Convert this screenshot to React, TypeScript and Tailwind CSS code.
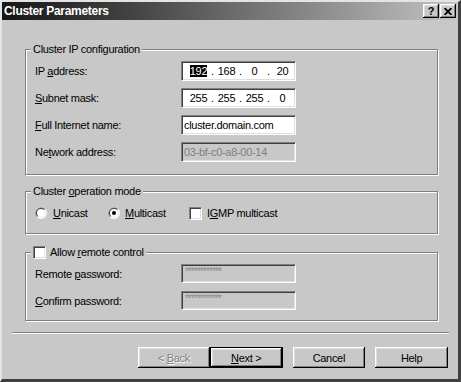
import type { ReactNode } from "react";

const SUNKEN =
  "border border-t-[#808080] border-l-[#808080] border-b-white border-r-white shadow-[inset_1px_1px_0_#404040,inset_-1px_-1px_0_#dfdfdf]";
const RAISED =
  "bg-[#c8c8c8] shadow-[inset_-1px_-1px_0_#000,inset_1px_1px_0_#fff,inset_-2px_-2px_0_#808080,inset_2px_2px_0_#dfdfdf]";
const FRAME = "relative border border-[#808080] shadow-[inset_1px_1px_0_#fff,1px_1px_0_#fff]";

function Key({ children }: { children: ReactNode }) {
  return <span className="underline underline-offset-[1px]">{children}</span>;
}

function Radio({ checked }: { checked?: boolean }) {
  return (
    <svg width="12" height="12" viewBox="0 0 12 12" className="shrink-0">
      <circle cx="6" cy="6" r="6" fill="#fff" />
      <path d="M1.76 10.24 A6 6 0 0 1 10.24 1.76 Z" fill="#808080" />
      <circle cx="6" cy="6" r="5" fill="#dfdfdf" />
      <path d="M2.46 9.54 A5 5 0 0 1 9.54 2.46 Z" fill="#404040" />
      <circle cx="6" cy="6" r="4" fill="#fff" />
      {checked && <circle cx="6" cy="6" r="2" fill="#000" />}
    </svg>
  );
}

function Check() {
  return <div className={`h-[13px] w-[13px] shrink-0 bg-white ${SUNKEN}`} />;
}

function IpBox({ parts, selectFirst }: { parts: string[]; selectFirst?: boolean }) {
  return (
    <div className={`flex h-[20px] w-[115px] items-center bg-white pl-[5px] ${SUNKEN}`}>
      {parts.map((p, i) => (
        <div key={i} className="flex items-center">
          {i > 0 && <span className="w-[5px] text-center">.</span>}
          <span className="w-[23px] text-center">
            {i === 0 && selectFirst ? <span className="bg-black leading-[13px] text-white">{p}</span> : p}
          </span>
        </div>
      ))}
    </div>
  );
}

function Row({ label, children, h }: { label: ReactNode; children: ReactNode; h: string }) {
  return (
    <div className={`flex items-center ${h}`}>
      <span className="w-[146px]">{label}</span>
      {children}
    </div>
  );
}

function Masked() {
  return (
    <div className={`flex h-[19px] w-[115px] items-start pl-[3px] pt-[1px] text-[10px] leading-[12px] tracking-[-0.9px] text-[#8a8a8a] ${SUNKEN}`}>
      ************
    </div>
  );
}

export default function App() {
  return (
    <div className="h-[382px] w-[461px] overflow-hidden bg-[#c8c8c8] font-['Liberation_Sans',Arial,sans-serif] text-[11px] leading-[14px] tracking-[-0.3px] text-black">
      <div className="flex h-full flex-col border-t-2 border-l-2 border-r-[3px] border-b-[3px] border-t-[#e4e4e4] border-l-[#e4e4e4] border-r-[#404040] border-b-[#404040]">
        {/* title bar */}
        <div className="flex h-[18px] items-center bg-gradient-to-r from-[#161616] via-[#6a6a6a] to-[#c4c4c4] pl-[2px] pr-[2px]">
          <span className="flex-1 text-[12px] font-bold text-white">Cluster Parameters</span>
          <div className={`flex h-[14px] w-[16px] items-center justify-center text-[11px] font-bold tracking-normal ${RAISED}`}>?</div>
          <div className={`ml-[1px] flex h-[14px] w-[16px] items-center justify-center ${RAISED}`}>
            <svg width="8" height="7" viewBox="0 0 8 7">
              <path d="M0.5 0 L7.5 7 M7.5 0 L0.5 7" stroke="#000" strokeWidth="1.8" />
            </svg>
          </div>
        </div>

        <div className="flex flex-col px-[10px]">
          {/* Cluster IP configuration */}
          <div className={`ml-[13px] mt-[29px] w-[413px] ${FRAME}`}>
            <span className="absolute -top-[8px] left-[5px] bg-[#c8c8c8] px-[2px]">
              Cluster IP configuration
            </span>
            <div className="flex flex-col gap-[7px] pb-[12px] pl-[9px] pt-[11px]">
              <Row h="h-[20px]" label={<>IP <Key>a</Key>ddress:</>}>
                <IpBox parts={["192", "168", "0", "20"]} selectFirst />
              </Row>
              <Row h="h-[20px]" label={<><Key>S</Key>ubnet mask:</>}>
                <IpBox parts={["255", "255", "255", "0"]} />
              </Row>
              <Row h="h-[20px]" label={<><Key>F</Key>ull Internet name:</>}>
                <div className={`flex h-[20px] w-[115px] items-center bg-white pl-[2px] ${SUNKEN}`}>
                  cluster.domain.com
                </div>
              </Row>
              <Row h="h-[20px]" label={<>Ne<Key>t</Key>work address:</>}>
                <div className={`flex h-[20px] w-[115px] items-center pl-[2px] text-[#808080] ${SUNKEN}`}>
                  03-bf-c0-a8-00-14
                </div>
              </Row>
            </div>
          </div>

          {/* Cluster operation mode */}
          <div className={`ml-[13px] mt-[16px] w-[413px] ${FRAME}`}>
            <span className="absolute -top-[8px] left-[5px] bg-[#c8c8c8] px-[2px]">
              Cluster <Key>o</Key>peration mode
            </span>
            <div className="flex h-[41px] items-center pl-[9px] pt-[1px]">
              <div className="flex w-[73px] items-center gap-[6px]">
                <Radio />
                <span><Key>U</Key>nicast</span>
              </div>
              <div className="flex w-[81px] items-center gap-[5px]">
                <Radio checked />
                <span><Key>M</Key>ulticast</span>
              </div>
              <div className="flex items-center gap-[5px]">
                <Check />
                <span>I<Key>G</Key>MP multicast</span>
              </div>
            </div>
          </div>

          {/* Remote control */}
          <div className={`ml-[13px] mt-[18px] w-[413px] ${FRAME}`}>
            <div className="absolute -top-[8px] left-[5px] flex h-[14px] items-center gap-[4px] bg-[#c8c8c8] px-[2px]">
              <Check />
              <span>Allow <Key>r</Key>emote control</span>
            </div>
            <div className="flex flex-col gap-[8px] pb-[10px] pl-[9px] pt-[11px]">
              <Row h="h-[19px]" label={<>Remote <Key>p</Key>assword:</>}>
                <Masked />
              </Row>
              <Row h="h-[19px]" label={<><Key>C</Key>onfirm password:</>}>
                <Masked />
              </Row>
            </div>
          </div>

          {/* separator */}
          <div className="mt-[11px] h-[2px] w-[437px] border-t border-t-[#808080] border-b border-b-white" />

          {/* buttons */}
          <div className="mt-[13px] flex">
            <div className={`ml-[126px] flex h-[21px] w-[72px] items-center justify-center text-[#808080] [text-shadow:1px_1px_0_#fff] ${RAISED}`}>
              <span>
                &lt; <Key>B</Key>ack
              </span>
            </div>
            <div className="flex h-[21px] w-[73px] border border-black">
              <div className={`flex flex-1 items-center justify-center ${RAISED}`}>
                <span>
                  <Key>N</Key>ext &gt;
                </span>
              </div>
            </div>
            <div className={`ml-[10px] flex h-[21px] w-[73px] items-center justify-center ${RAISED}`}>Cancel</div>
            <div className={`ml-[10px] flex h-[21px] w-[73px] items-center justify-center ${RAISED}`}>Help</div>
          </div>
        </div>
      </div>
    </div>
  );
}
